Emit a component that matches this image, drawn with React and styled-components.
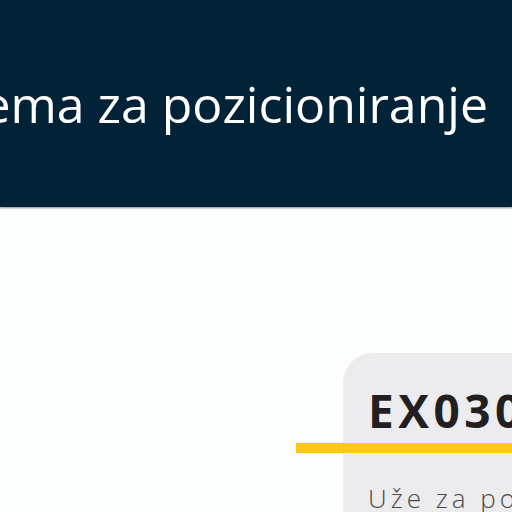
import styled, { createGlobalStyle } from 'styled-components';

const GlobalStyle = createGlobalStyle`
  html, body {
    margin: 0;
    padding: 0;
    background: #fcfefe;
    overflow: hidden;
  }
  body {
    font-family: 'Open Sans', 'Liberation Sans', sans-serif;
  }
`;

const Page = styled.div`
  width: 512px;
  height: 512px;
  overflow: hidden;
  display: flex;
  flex-direction: column;
`;

const Header = styled.header`
  height: 207px;
  flex-shrink: 0;
  background: #022238;
  box-shadow: 0 1px 2px rgba(0, 0, 0, 0.45);
  display: flex;
  justify-content: flex-end;
  align-items: flex-start;
  padding: 74px 24px 0 0;
  box-sizing: border-box;
  overflow: hidden;
  position: relative;
  z-index: 1;
`;

const Title = styled.h1`
  margin: 0;
  font-size: 50px;
  line-height: 1.2;
  font-weight: 400;
  color: #ffffff;
  white-space: nowrap;
`;

const Content = styled.main`
  flex: 1;
  padding: 146px 0 0 343px;
`;

const Card = styled.section`
  width: 320px;
  height: 260px;
  background: #ececee;
  border-radius: 30px 0 0 0;
  padding: 30px 0 0 25px;
  box-sizing: border-box;
`;

const Code = styled.h2`
  margin: 0;
  font-size: 46px;
  line-height: 1.2;
  font-weight: 700;
  letter-spacing: 4.5px;
  color: #231f20;
  white-space: nowrap;
`;

const Accent = styled.div`
  height: 10px;
  margin: 5px 0 0 -72px;
  background: #fcc716;
`;

const Subtitle = styled.p`
  margin: 27px 0 0;
  font-size: 26px;
  line-height: 1.4;
  font-weight: 300;
  letter-spacing: 4px;
  color: #4a4a4a;
  white-space: nowrap;
`;

export default function App() {
  return (
    <Page>
      <GlobalStyle />
      <Header>
        <Title>Sistema za pozicioniranje</Title>
      </Header>
      <Content>
        <Card>
          <Code>EX030</Code>
          <Accent />
          <Subtitle>Uže za pozicioniranje</Subtitle>
        </Card>
      </Content>
    </Page>
  );
}
